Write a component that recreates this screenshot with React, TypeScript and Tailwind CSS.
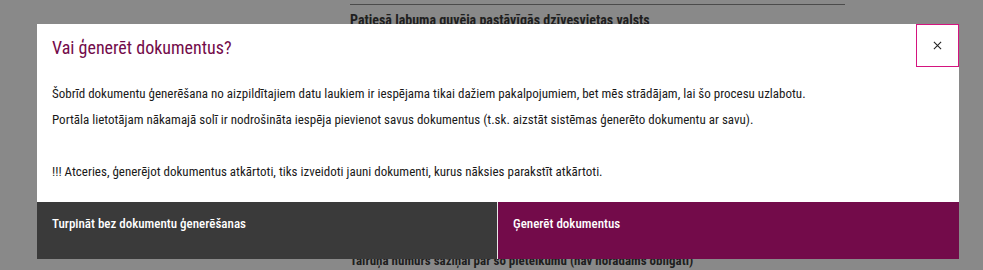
const font = "font-['Roboto',sans-serif] [font-stretch:condensed]";

const App = () => {
    return (
        <div className={`relative w-full h-[270px] overflow-hidden bg-[#898989] ${font}`}>
            {/* page behind the overlay */}
            <div className="pl-[350px] pt-[4px] flex flex-col h-full">
                <div className="w-[495px] border-t border-[#4b4b4b]"></div>
                <p className="mt-[6px] text-[14px] font-bold leading-[18px] text-[#1f1f1f]">
                    Patiesā labuma guvēja pastāvīgās dzīvesvietas valsts
                </p>
                <p className="mt-auto mb-0 text-[13px] font-bold leading-[18px] text-[#1f1f1f]">
                    Tālruņa numurs saziņai par šo pieteikumu (nav norādams obligāti)
                </p>
            </div>

            {/* modal */}
            <div className="absolute left-[37px] top-[24px] w-[922px] bg-white">
                <div className="relative h-[43px] pl-[15px] flex items-center">
                    <h2 className="text-[18px] leading-[24px] text-[#730b4a] mt-[5px]">Vai ģenerēt dokumentus?</h2>
                    <button className="absolute right-0 top-0 w-[43px] h-[43px] border border-[#d4147f] flex items-center justify-center">
                        <svg className="w-[9px] h-[9px]" viewBox="0 0 10 10" fill="none" stroke="#222" strokeWidth={1.2}>
                            <path d="M1 1l8 8M9 1l-8 8" />
                        </svg>
                    </button>
                </div>
                <div className="px-[15px] pt-[18px] pb-[21px] text-[13px] leading-[18px] text-[#1a1a1a] flex flex-col gap-[8px]">
                    <p>Šobrīd dokumentu ģenerēšana no aizpildītajiem datu laukiem ir iespējama tikai dažiem pakalpojumiem, bet mēs strādājam, lai šo procesu uzlabotu.</p>
                    <p>Portāla lietotājam nākamajā solī ir nodrošināta iespēja pievienot savus dokumentus (t.sk. aizstāt sistēmas ģenerēto dokumentu ar savu).</p>
                    <p>&nbsp;</p>
                    <p>!!! Atceries, ģenerējot dokumentus atkārtoti, tiks izveidoti jauni dokumenti, kurus nāksies parakstīt atkārtoti.</p>
                </div>
                <div className="flex h-[57px]">
                    <button className="w-[460px] bg-[#3a3a3a] text-white text-[13px] font-medium text-left pl-[15px] pt-[12px] flex items-start">
                        Turpināt bez dokumentu ģenerēšanas
                    </button>
                    <button className="flex-1 border-l border-[#e8e8e8] bg-[#730b4a] text-white text-[13px] font-medium text-left pl-[15px] pt-[12px] flex items-start">
                        Ģenerēt dokumentus
                    </button>
                </div>
            </div>
        </div>
    );
};

export default App;
